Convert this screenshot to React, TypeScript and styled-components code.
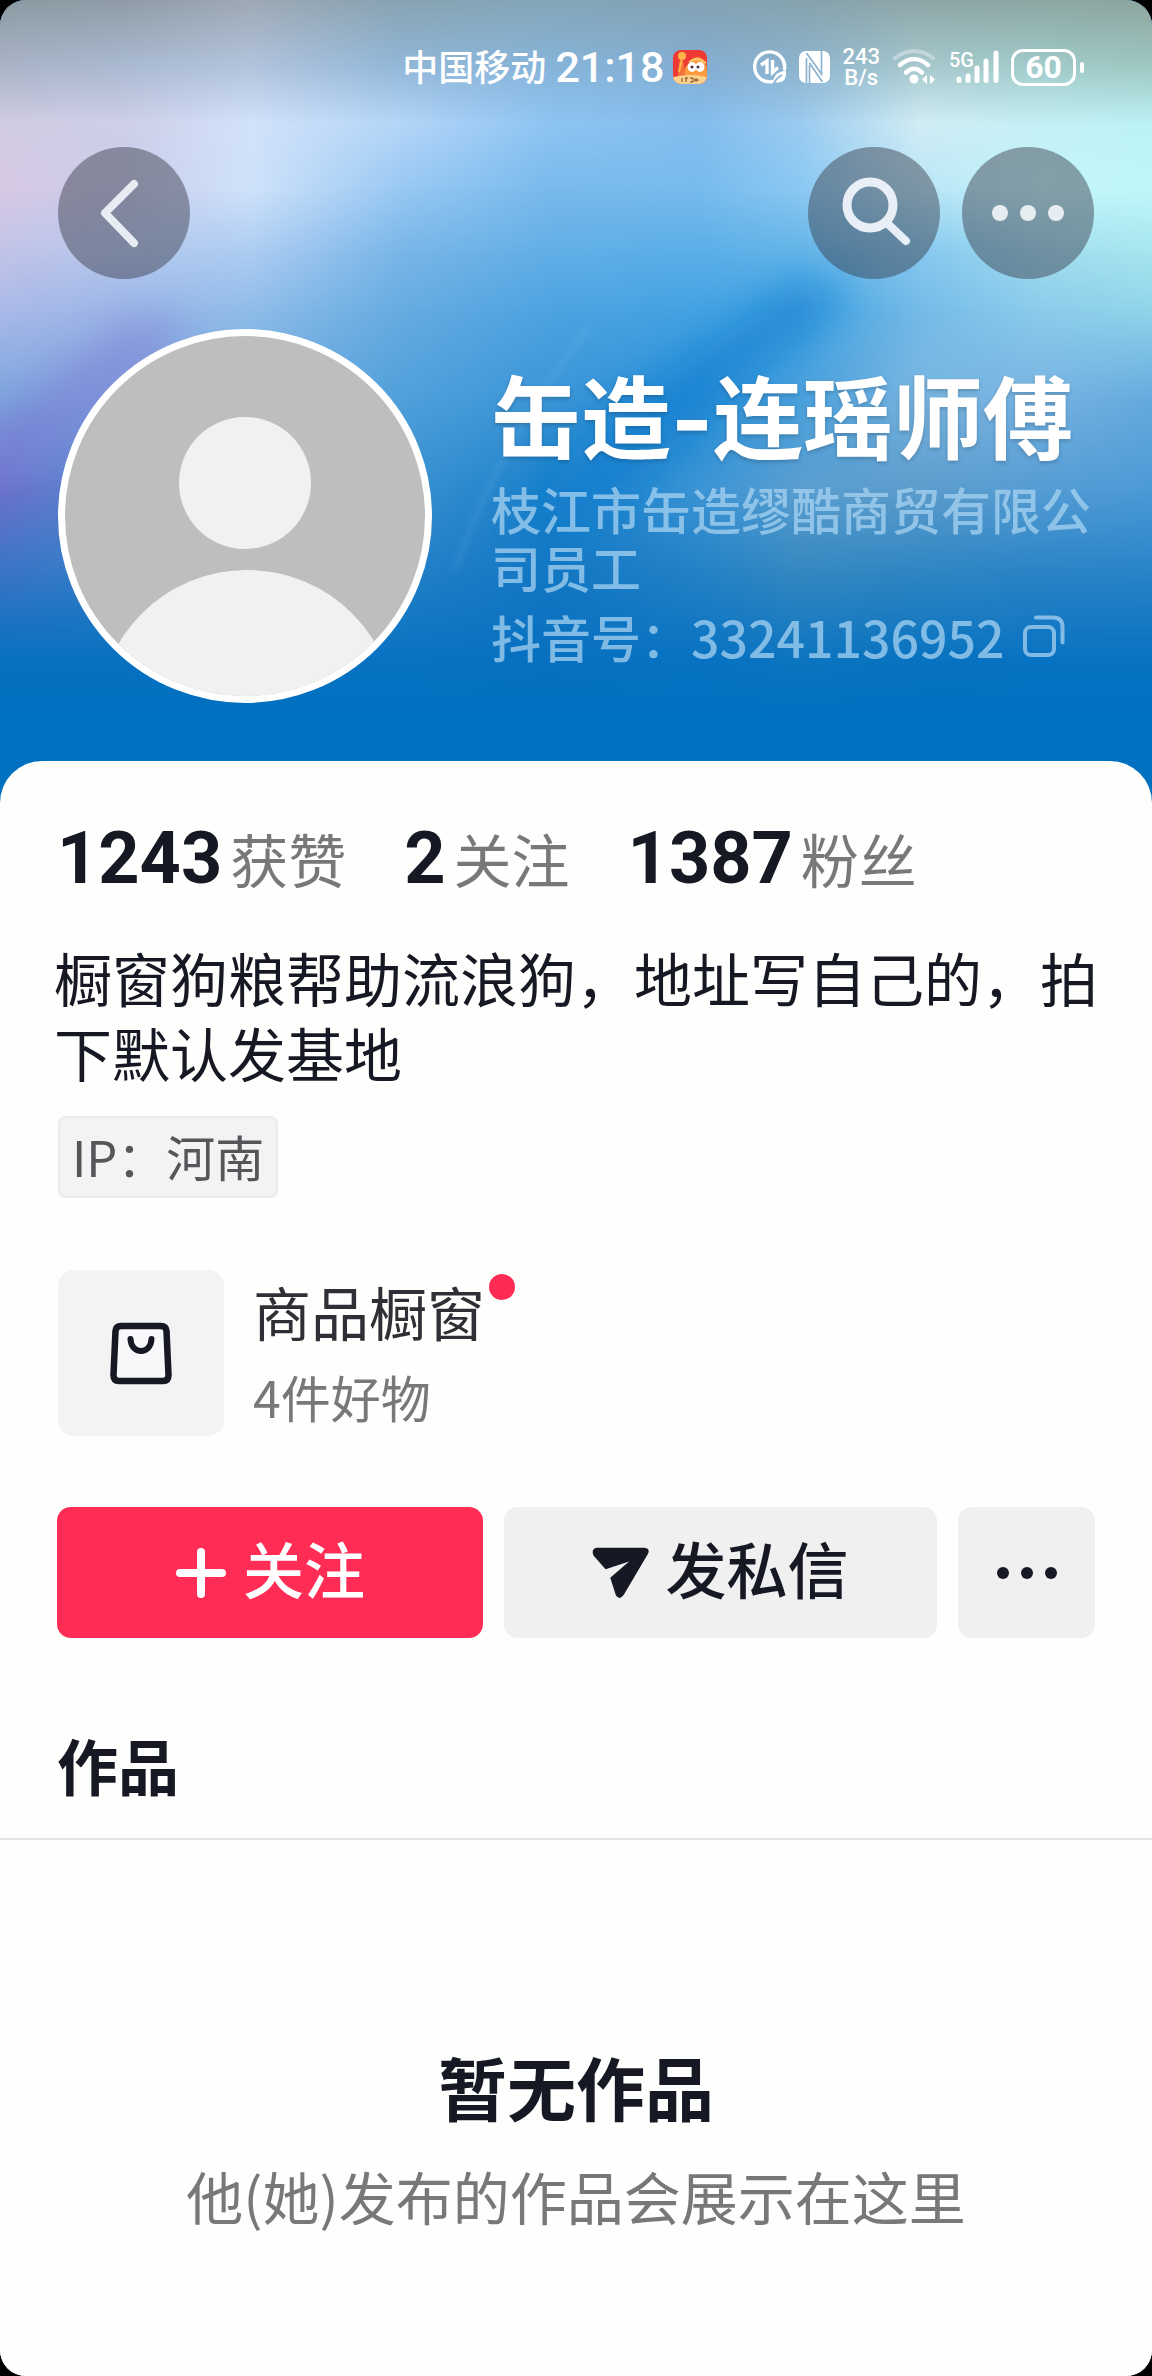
import React from "react";
import styled, { createGlobalStyle } from "styled-components";

const GlobalStyle = createGlobalStyle`
  *, *::before, *::after { box-sizing: border-box; }
  html, body { margin: 0; padding: 0; background: #000; }
  body {
    font-family: "Noto Sans CJK SC", "Noto Sans", sans-serif;
    color: #161823;
    -webkit-font-smoothing: antialiased;
  }
  h1, h2, p, dl, dd, dt { margin: 0; }
  button { font: inherit; color: inherit; border: 0; padding: 0; cursor: pointer; }
  a { color: inherit; text-decoration: none; }
`;

const Page = styled.div`
  min-height: 100vh;
  display: flex;
  flex-direction: column;
  background: #fefefd;
  border-radius: 26px;
  overflow: hidden;
`;

/* ---------- header ---------- */

const Header = styled.header`
  position: relative;
  isolation: isolate;
  padding-bottom: 100px;
  background: #0070c0;
`;

const Backdrop = styled.svg`
  position: absolute;
  inset: 0;
  width: 100%;
  height: 100%;
  z-index: -1;
`;

const StatusBar = styled.div`
  height: 134px;
  padding-right: 68px;
  display: flex;
  align-items: center;
  justify-content: flex-end;
  gap: 12px;
  color: #fff;
`;

const StatusLeft = styled.div`
  display: flex;
  align-items: center;
  gap: 9px;
  margin-right: 34px;
`;

const Carrier = styled.span`
  padding-bottom: 4px;
  font-size: 36px;
  line-height: 44px;
  font-weight: 500;
`;

const Clock = styled.time`
  font-family: Roboto, sans-serif;
  font-size: 43px;
  line-height: 44px;
  font-weight: 500;
`;

const Speed = styled.span`
  display: flex;
  flex-direction: column;
  align-items: center;
  font-family: Roboto, sans-serif;
  font-weight: 500;
  font-size: 22px;
  line-height: 21px;
`;

const Battery = styled.span`
  display: flex;
  align-items: center;
  gap: 4px;
  &::after {
    content: "";
    width: 4px;
    height: 11px;
    border-radius: 2px;
    background: #fff;
  }
`;

const BatteryBody = styled.span`
  width: 65px;
  height: 37px;
  border: 3px solid #fff;
  border-radius: 12px;
  display: flex;
  align-items: center;
  justify-content: center;
  font-family: Roboto, sans-serif;
  font-weight: 700;
  font-size: 32px;
  line-height: 32px;
`;

const NavBar = styled.nav`
  display: flex;
  gap: 22px;
  padding: 13px 58px 0;
`;

const RoundButton = styled.button<{ $first?: boolean }>`
  width: 132px;
  height: 132px;
  border-radius: 50%;
  background: rgba(50, 54, 66, 0.45);
  margin-right: ${(p) => (p.$first ? "auto" : "0")};
  svg { display: block; }
`;

const Profile = styled.section`
  display: flex;
  gap: 59px;
  padding: 50px 58px 0;
`;

const Avatar = styled.svg`
  flex: none;
  width: 374px;
  height: 374px;
  border: 7px solid #fff;
  border-radius: 50%;
  background: #bebebe;
`;

const Info = styled.div`
  flex: 1;
  min-width: 0;
  padding-top: 38px;
`;

const Name = styled.h1`
  font-family: Inter, "Noto Sans CJK SC", sans-serif;
  font-size: 90px;
  line-height: 106px;
  font-weight: 700;
  color: #fff;
  white-space: nowrap;
  text-shadow: 0 2px 4px rgba(0, 0, 0, 0.2);
`;

const Meta = styled.p<{ $gap: number }>`
  margin-top: ${(p) => p.$gap}px;
  display: flex;
  align-items: center;
  font-size: 50px;
  line-height: 58px;
  font-weight: 500;
  color: rgba(168, 212, 242, 0.74);
`;

const CopyButton = styled.button`
  margin-left: 18px;
  background: none;
  color: rgba(168, 212, 242, 0.74);
  svg { display: block; }
`;

/* ---------- card ---------- */

const Card = styled.main`
  position: relative;
  flex: 1;
  margin-top: -42px;
  padding-top: 57px;
  background: #fefefd;
  border-radius: 42px 42px 0 0;
`;

const Stats = styled.dl`
  display: flex;
  gap: 58px;
  padding: 0 57px;
`;

const Stat = styled.div`
  display: flex;
  flex-direction: row-reverse;
  align-items: baseline;
  gap: 8px;
  line-height: 80px;
`;

const StatValue = styled.dd`
  font-family: Roboto, sans-serif;
  font-size: 72px;
  font-weight: 700;
`;

const StatLabel = styled.dt`
  font-size: 58px;
  color: #77787a;
`;

const Bio = styled.p`
  margin-top: 41px;
  padding: 0 54px;
  font-size: 58px;
  line-height: 75px;
`;

const TagRow = styled.div`
  display: flex;
  padding: 26px 58px 0;
`;

const Tag = styled.span`
  padding: 0 12px 2px;
  border: 2px solid #ebebeb;
  border-radius: 8px;
  background: #f3f3f3;
  font-size: 49px;
  line-height: 76px;
  color: #55565a;
`;

const Shop = styled.a`
  display: flex;
  gap: 29px;
  padding: 72px 58px 0;
`;

const ShopIcon = styled.span`
  width: 166px;
  height: 166px;
  display: flex;
  align-items: center;
  justify-content: center;
  border-radius: 16px;
  background: #f3f3f3;
`;

const ShopText = styled.span`
  display: flex;
  flex-direction: column;
  padding-top: 3px;
`;

const ShopTitle = styled.span`
  position: relative;
  font-size: 58px;
  line-height: 76px;
  color: #2f3035;
  &::after {
    content: "";
    position: absolute;
    left: 100%;
    top: 1px;
    margin-left: 4px;
    width: 26px;
    height: 26px;
    border-radius: 50%;
    background: #fe2c55;
  }
`;

const ShopCount = styled.span`
  margin-top: 18px;
  font-size: 50px;
  line-height: 58px;
  color: #77787a;
`;

const Actions = styled.div`
  display: grid;
  grid-template-columns: 426fr 433fr 137fr;
  gap: 21px;
  padding: 71px 57px 0;
`;

const ActionButton = styled.button<{ $primary?: boolean }>`
  height: 131px;
  display: flex;
  align-items: center;
  justify-content: center;
  gap: 16px;
  border-radius: 14px;
  background: ${(p) => (p.$primary ? "#ff2d55" : "#f0f0f0")};
  color: ${(p) => (p.$primary ? "#fff" : "#161823")};
`;

const ActionLabel = styled.span`
  padding-bottom: 10px;
  font-size: 61px;
  line-height: 80px;
  font-weight: 500;
`;

const WorksTitle = styled.h2`
  margin-top: 87px;
  padding: 0 57px 33px;
  border-bottom: 2px solid #e4e4e4;
  font-size: 61px;
  line-height: 80px;
  font-weight: 700;
`;

const Empty = styled.section`
  padding: 201px 57px 100px;
  text-align: center;
`;

const EmptyTitle = styled.h2`
  font-size: 69px;
  line-height: 90px;
  font-weight: 700;
`;

const EmptyText = styled.p`
  margin-top: 26px;
  font-size: 57px;
  line-height: 76px;
  color: #77787a;
`;

/* ---------- drawings ---------- */

const MESH_X = [0, 120, 250, 400, 550, 700, 800, 920, 1040, 1152];
const MESH: { y: number; colors: string[] }[] = [
  { y: 0, colors: ["#8b9aa2", "#8f9ca6", "#9ea9b5", "#88a3b2", "#84a6b8", "#84a2b4", "#86a3ae", "#8ea6a8", "#8ca7a3", "#8ea49f"] },
  { y: 65, colors: ["#a9b3c6", "#a9b9d0", "#b2c3dc", "#92b7d8", "#86b4d9", "#84aed2", "#8db3cd", "#a6c8cc", "#a0cac9", "#9ec7c2"] },
  { y: 125, colors: ["#d2cde4", "#cfcfe8", "#d2e2fa", "#b4d6f8", "#8ec4f2", "#84bdee", "#9bcbf0", "#d2edf5", "#c4f0f5", "#bcf3f6"] },
  { y: 190, colors: ["#d8c8e4", "#c8cbea", "#cfe2fa", "#98c8f2", "#78b9ec", "#76bbee", "#8ac8f2", "#b8e4f6", "#c4f6fb", "#c0f6fa"] },
  { y: 250, colors: ["#c2c4e8", "#b6c8ee", "#aecdf2", "#7ab6e8", "#62afe7", "#5cafe8", "#64b4e8", "#86c8ee", "#a2dcf0", "#a8e6ee"] },
  { y: 310, colors: ["#aab9e8", "#9cb6e6", "#90bce8", "#66ace2", "#4ea3e0", "#44a2e2", "#42a0e0", "#74bbe8", "#8cccea", "#90d4ea"] },
  { y: 400, colors: ["#7ca6de", "#7ca0dc", "#6aa8de", "#50a0da", "#3a94d6", "#2c90d8", "#4aa0dc", "#78b4e0", "#76b2e2", "#64aade"] },
  { y: 490, colors: ["#6a72ca", "#5488ce", "#4090d0", "#3a90d0", "#1a80ca", "#3c94d4", "#5a9ed0", "#5c9ccc", "#549cd4", "#4c9ad6"] },
  { y: 570, colors: ["#3c74c6", "#3080c8", "#2a82c8", "#2480c8", "#1277c4", "#2482c6", "#3688c0", "#3086c2", "#2c84c6", "#2a84c8"] },
  { y: 660, colors: ["#0870c0", "#0870c0", "#0872c2", "#0872c2", "#0870c0", "#0872c2", "#0c74c0", "#0872c0", "#0872c2", "#0872c2"] },
  { y: 720, colors: MESH_X.map(() => "#0070c0") },
];

function Wallpaper() {
  return (
    <Backdrop viewBox="0 0 1152 803" preserveAspectRatio="none" aria-hidden="true">
      <defs>
        <filter id="soft" x="-30%" y="-30%" width="160%" height="160%">
          <feGaussianBlur stdDeviation="20" />
        </filter>
        <filter id="fine" x="-30%" y="-30%" width="160%" height="160%">
          <feGaussianBlur stdDeviation="3" />
        </filter>
        {MESH.map((row, i) => {
          const prev = i === 0 ? row.y - 1 : MESH[i - 1].y;
          return (
            <React.Fragment key={row.y}>
              <linearGradient id={`row${i}`} gradientUnits="userSpaceOnUse" x1="0" y1="0" x2="1152" y2="0">
                {row.colors.map((c, j) => (
                  <stop key={j} offset={MESH_X[j] / 1152} stopColor={c} />
                ))}
              </linearGradient>
              <linearGradient id={`fade${i}`} gradientUnits="userSpaceOnUse" x1="0" y1={prev} x2="0" y2={row.y}>
                <stop offset="0" stopColor="#fff" stopOpacity={i === 0 ? 1 : 0} />
                <stop offset="1" stopColor="#fff" />
              </linearGradient>
              <mask id={`mask${i}`} maskUnits="userSpaceOnUse" x="0" y="0" width="1152" height="803">
                <rect width="1152" height="803" fill={`url(#fade${i})`} />
              </mask>
            </React.Fragment>
          );
        })}
      </defs>
      {MESH.map((row, i) => (
        <rect key={row.y} width="1152" height="803" fill={`url(#row${i})`} mask={`url(#mask${i})`} />
      ))}
      <path d="M-20 430 L140 315 L190 330 L90 430 L-20 500 Z" fill="#7f74d4" opacity="0.45" filter="url(#soft)" />
      <path d="M800 285 L850 290 L710 410 L610 520 L525 520 L600 420 Z" fill="#0f7dd0" opacity="0.65" filter="url(#soft)" />
      <path d="M590 325 Q500 440 455 570" fill="none" stroke="#8cc4ee" strokeWidth="4" opacity="0.2" filter="url(#fine)" />
    </Backdrop>
  );
}

const AppBadge = () => (
  <svg width="34" height="34" viewBox="0 0 34 34" aria-hidden="true">
    <defs>
      <clipPath id="badge"><rect width="34" height="34" rx="8" /></clipPath>
    </defs>
    <g clipPath="url(#badge)">
      <rect width="34" height="34" fill="#ee3a33" />
      <path d="M6 12 Q10 8 11 14 L12 26 H5 Z" fill="#f2703a" />
      <circle cx="9" cy="6" r="4" fill="#fbb548" />
      <path d="M9 8 L6 22" stroke="#fbb548" strokeWidth="2" />
      <path d="M12 27 Q10 17 16 14 Q18 7 25 7 Q35 8 34 27 Z" fill="#fb9a3f" />
      <path d="M16 12 Q24 6 33 13" stroke="#ffc66c" strokeWidth="2" fill="none" />
      <ellipse cx="19" cy="17" rx="4.500" ry="5" fill="#fff" />
      <ellipse cx="27" cy="17" rx="4.500" ry="5" fill="#fff" />
      <circle cx="19" cy="17" r="1.500" fill="#4a2f4d" />
      <circle cx="25" cy="17" r="1.500" fill="#4a2f4d" />
      <path d="M0 27 Q17 23 34 27 V34 H0 Z" fill="#fbd28c" />
      <path d="M9 28 v4 M12 28 h3 M13 28 v4 M17 28 h3 v4 h-3 M23 28 v4 M21 30 h5" stroke="#7a3c20" strokeWidth="1" fill="none" />
    </g>
  </svg>
);

const DataIcon = () => (
  <svg width="34" height="34" viewBox="0 0 34 34" fill="none" stroke="#fff" aria-hidden="true">
    <path d="M20 31.5 A15 15 0 1 1 31.5 19" strokeWidth="3.4" strokeLinecap="round" />
    <path d="M8 15 L14 11 V24" strokeWidth="3.400" />
    <path d="M19.500 10 V22.500 L25 17.500" strokeWidth="3.400" />
    <path d="M21 32 Q19 23 33 20.500 Q34 33 24 32.500 Z" fill="#fff" stroke="none" />
    <path d="M20.500 33 Q25 27 29 25" stroke="#86b0cf" strokeWidth="1.400" />
  </svg>
);

const NfcIcon = () => (
  <svg width="31" height="32" viewBox="0 0 31 32" aria-hidden="true">
    <rect width="31" height="32" rx="7" fill="#fff" />
    <g fill="none" stroke="#86b0cf" strokeWidth="1.600">
      <path d="M7.500 32 V7 M7.500 2 L22.500 23 V0" />
      <path d="M10.500 14 V32 M10.500 12 L23.500 31" />
    </g>
  </svg>
);

const WifiIcon = () => (
  <svg width="45" height="36" viewBox="0 0 45 36" fill="none" stroke="#fff" strokeLinecap="round" aria-hidden="true">
    <path d="M3 9 Q22 -5 41 9" strokeWidth="4" opacity="0.35" />
    <path d="M8 16 Q22 4 36 16" strokeWidth="4.500" />
    <path d="M14 23.500 Q22 16 30 23.500" strokeWidth="4.500" />
    <circle cx="22" cy="30" r="4.500" fill="#fff" stroke="none" />
    <path d="M35 26 L30 30.500 L35 35 Z M38 26 L43 30.500 L38 35 Z" fill="#fff" stroke="none" />
  </svg>
);

const Signal = styled.span`
  display: grid;
  > * { grid-area: 1 / 1; }
  svg { display: block; }
`;

const SignalLabel = styled.span`
  font-family: Roboto, sans-serif;
  font-size: 20px;
  line-height: 22px;
  font-weight: 500;
`;

const SignalIcon = () => (
  <Signal>
    <svg width="50" height="36" viewBox="0 0 50 36" stroke="#fff" strokeWidth="5" strokeLinecap="round" aria-hidden="true">
      <path d="M10 30 V31.500 M19 27 V31.500 M28 19 V31.500 M37 12 V31.500 M47 4 V31.500" />
    </svg>
    <SignalLabel>5G</SignalLabel>
  </Signal>
);

const BackIcon = () => (
  <svg width="132" height="132" viewBox="0 0 132 132" fill="none" stroke="#e8ecf3" strokeWidth="8" strokeLinecap="round" strokeLinejoin="round" aria-hidden="true">
    <path d="M76 37 L47 66 L76 96" />
  </svg>
);

const SearchIcon = () => (
  <svg width="132" height="132" viewBox="0 0 132 132" fill="none" stroke="#e8eff7" strokeLinecap="round" aria-hidden="true">
    <circle cx="62" cy="58" r="23" strokeWidth="9" />
    <path d="M80 77 L98 94" strokeWidth="8" />
  </svg>
);

const MoreIcon = () => (
  <svg width="132" height="132" viewBox="0 0 132 132" fill="#e6eef2" aria-hidden="true">
    <circle cx="38" cy="66" r="8" />
    <circle cx="66" cy="66" r="8" />
    <circle cx="94" cy="66" r="8" />
  </svg>
);

const CopyIcon = () => (
  <svg width="42" height="42" viewBox="0 0 42 42" fill="none" stroke="currentColor" strokeWidth="4" strokeLinecap="round" aria-hidden="true">
    <rect x="2" y="12" width="29" height="28" rx="6" />
    <path d="M13 2.500 H30 Q39.500 2.500 39.500 12 V27.500" />
  </svg>
);

const BagIcon = () => (
  <svg width="62" height="63" viewBox="0 0 62 63" fill="none" stroke="#161823" strokeLinecap="round" aria-hidden="true">
    <path d="M11 4 H51 Q56 4 56.500 9 L58.500 53 Q58.500 59 53 59 H9 Q3.500 59 3.500 53 L5.500 9 Q6 4 11 4 Z" fill="#f8f8fa" strokeWidth="6.500" />
    <path d="M20.500 17 C21 33 41 33 41.500 17" strokeWidth="6" />
  </svg>
);

const PlusIcon = () => (
  <svg width="52" height="52" viewBox="0 0 52 52" stroke="#fff" strokeWidth="8" strokeLinecap="round" aria-hidden="true">
    <path d="M26 5 V47 M5 26 H47" />
  </svg>
);

const SendIcon = () => (
  <svg width="57" height="52" viewBox="72 58 172 156" fill="#161823" aria-hidden="true">
    <path d="M86 60 H230 Q248 62 241 78 L168 202 Q155 220 144 203 L127 150 L184 101 L113 125 L77 84 Q68 64 86 60 Z" />
  </svg>
);

const DotsIcon = () => (
  <svg width="62" height="14" viewBox="0 0 62 14" fill="#161823" aria-hidden="true">
    <circle cx="7" cy="7" r="6" />
    <circle cx="31" cy="7" r="6" />
    <circle cx="55" cy="7" r="6" />
  </svg>
);

const stats = [
  { value: "1243", label: "获赞" },
  { value: "2", label: "关注" },
  { value: "1387", label: "粉丝" },
];

export default function App() {
  return (
    <Page lang="zh-CN">
      <GlobalStyle />
      <Header>
        <Wallpaper />
        <StatusBar>
          <StatusLeft>
            <Carrier>中国移动</Carrier>
            <Clock>21:18</Clock>
            <AppBadge />
          </StatusLeft>
          <DataIcon />
          <NfcIcon />
          <Speed>
            <span>243</span>
            <span>B/s</span>
          </Speed>
          <WifiIcon />
          <SignalIcon />
          <Battery>
            <BatteryBody>60</BatteryBody>
          </Battery>
        </StatusBar>
        <NavBar>
          <RoundButton $first type="button" aria-label="返回"><BackIcon /></RoundButton>
          <RoundButton type="button" aria-label="搜索"><SearchIcon /></RoundButton>
          <RoundButton type="button" aria-label="更多"><MoreIcon /></RoundButton>
        </NavBar>
        <Profile>
          <Avatar viewBox="0 0 360 360" role="img" aria-label="头像">
            <g fill="#f1f1f0">
              <circle cx="180" cy="147" r="66" />
              <circle cx="182" cy="383" r="149" />
            </g>
          </Avatar>
          <Info>
            <Name>缶造-连瑶师傅</Name>
            <Meta $gap={6}>枝江市缶造缪酷商贸有限公司员工</Meta>
            <Meta $gap={12}>
              抖音号：33241136952
              <CopyButton type="button" aria-label="复制"><CopyIcon /></CopyButton>
            </Meta>
          </Info>
        </Profile>
      </Header>
      <Card>
        <Stats>
          {stats.map((s) => (
            <Stat key={s.label}>
              <StatLabel>{s.label}</StatLabel>
              <StatValue>{s.value}</StatValue>
            </Stat>
          ))}
        </Stats>
        <Bio>橱窗狗粮帮助流浪狗，地址写自己的，拍下默认发基地</Bio>
        <TagRow><Tag>IP：河南</Tag></TagRow>
        <Shop href="#shop">
          <ShopIcon><BagIcon /></ShopIcon>
          <ShopText>
            <ShopTitle>商品橱窗</ShopTitle>
            <ShopCount>4件好物</ShopCount>
          </ShopText>
        </Shop>
        <Actions>
          <ActionButton $primary type="button"><PlusIcon /><ActionLabel>关注</ActionLabel></ActionButton>
          <ActionButton type="button"><SendIcon /><ActionLabel>发私信</ActionLabel></ActionButton>
          <ActionButton type="button" aria-label="更多操作"><DotsIcon /></ActionButton>
        </Actions>
        <WorksTitle>作品</WorksTitle>
        <Empty>
          <EmptyTitle>暂无作品</EmptyTitle>
          <EmptyText>他(她)发布的作品会展示在这里</EmptyText>
        </Empty>
      </Card>
    </Page>
  );
}
